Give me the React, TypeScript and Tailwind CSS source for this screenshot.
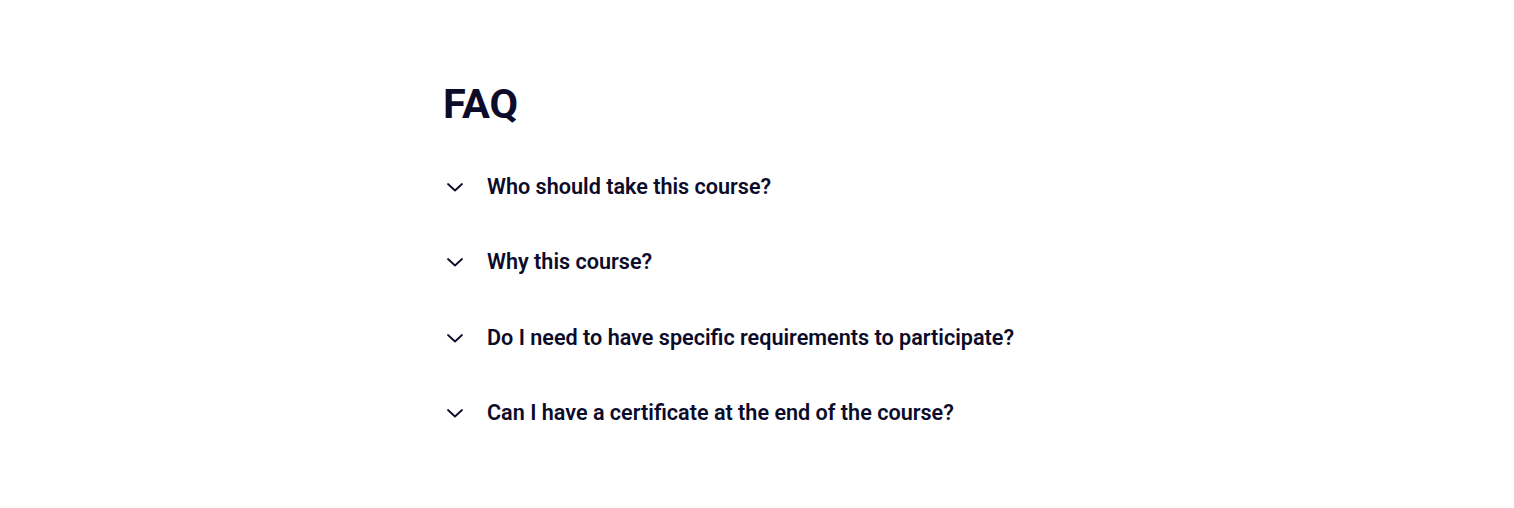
import React from "react";

const questions = [
  "Who should take this course?",
  "Why this course?",
  "Do I need to have specific requirements to participate?",
  "Can I have a certificate at the end of the course?",
];

function Chevron() {
  return (
    <svg width="20" height="20" viewBox="0 0 20 20" fill="none" className="shrink-0">
      <path d="M3 7 L10 13.5 L17 7" stroke="#0c0c2a" strokeWidth="1.8" strokeLinecap="round" strokeLinejoin="round" />
    </svg>
  );
}

export default function App() {
  return (
    <div className="min-h-[508px] bg-white" style={{ fontFamily: "Roboto, 'Liberation Sans', sans-serif" }}>
      <div className="mx-auto w-[628px] pt-[80px]">
        <h2 className="text-[41.5px] leading-[48px] font-bold text-[#0c0c2a]">FAQ</h2>
        <div className="mt-[45px] flex flex-col gap-[47.33px]">
          {questions.map((q) => (
            <div key={q} className="flex items-center gap-[22px] pl-[2px]">
              <Chevron />
              <span className="text-[21.6px] leading-[28px] font-semibold text-[#0c0c2a] whitespace-nowrap">{q}</span>
            </div>
          ))}
        </div>
      </div>
    </div>
  );
}
